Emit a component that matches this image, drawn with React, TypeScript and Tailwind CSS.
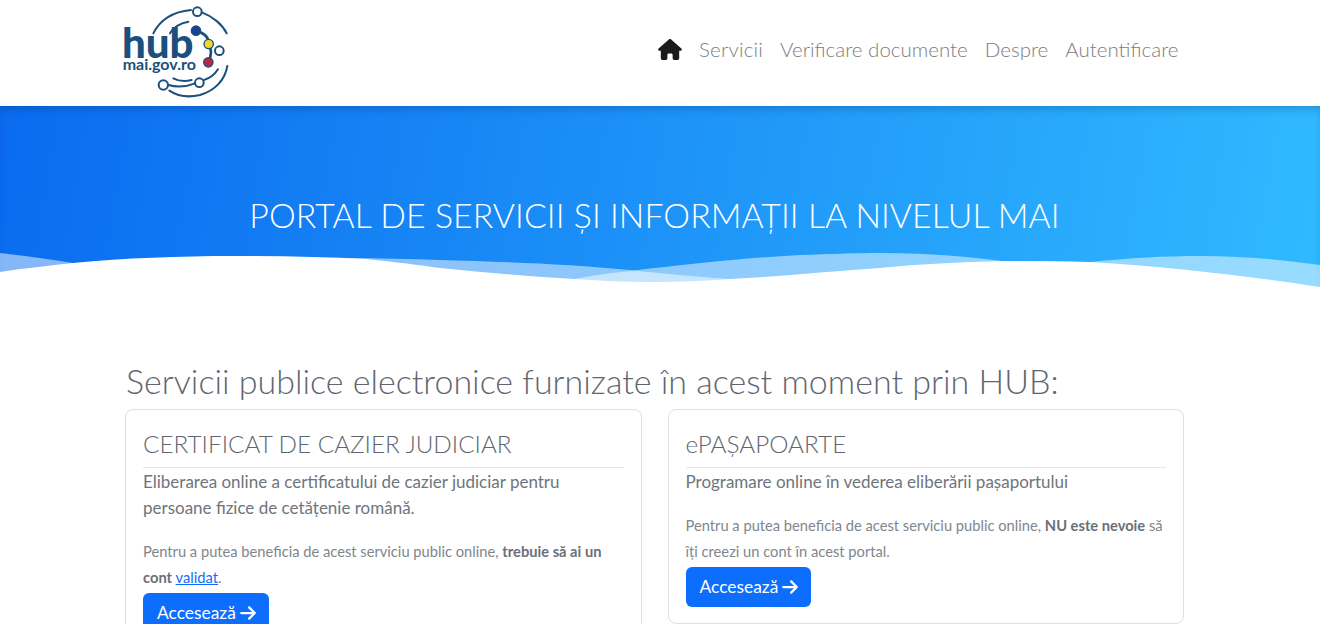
const font = "font-['Lato','Noto_Sans',sans-serif]";

function Logo() {
  const navy = "#1b4f7c";
  return (
    <svg width="130" height="105" viewBox="0 0 390 315" className="block" fill="none">
      <g stroke={navy} strokeWidth="6" strokeLinecap="round">
        <path d="M130 100 C150 60 190 35 243 30" />
        <circle cx="262" cy="35" r="13" />
        <path d="M277 38 C310 50 338 75 350 100" />
        <path d="M180 100 C190 82 208 70 235 65" />
        <path d="M262 95 C285 100 296 115 296 132 C308 150 302 172 295 187" strokeWidth="8" />
        <circle cx="328" cy="152" r="13" />
        <path d="M352 198 C345 240 315 272 270 285 C240 292 205 290 178 272" />
        <circle cx="160" cy="255" r="14" />
        <path d="M175 255 C200 262 230 260 255 250" />
        <circle cx="268" cy="248" r="13" />
        <path d="M190 235 C205 243 225 245 245 240" />
        <path d="M282 240 C300 235 315 222 324 208" />
      </g>
      <circle cx="258" cy="92" r="14" fill="#1d3f94" stroke={navy} strokeWidth="4" />
      <circle cx="296" cy="132" r="14" fill="#f4d52b" stroke={navy} strokeWidth="4" />
      <circle cx="295" cy="187" r="14" fill="#c3243b" stroke={navy} strokeWidth="4" />
      <text x="36" y="175" fontFamily="Lato, sans-serif" fontWeight="900" fontSize="126" fill={navy}>hub</text>
      <text x="38" y="211" fontFamily="Lato, sans-serif" fontWeight="700" fontSize="48" fill={navy}>mai.gov.ro</text>
    </svg>
  );
}

function HomeIcon() {
  return (
    <svg width="24" height="21" viewBox="0 0 576 512" fill="#1a1a1a" className="block">
      <path d="M575.800 255.500c0 18-15 32.100-32 32.100h-32l.7 160.200c0 2.700-.2 5.400-.5 8.100V472c0 22.100-17.900 40-40 40H456c-1.100 0-2.200 0-3.300-.1c-1.400 .1-2.800 .1-4.200 .1H416 392c-22.100 0-40-17.900-40-40V448 384c0-17.700-14.300-32-32-32H256c-17.700 0-32 14.300-32 32v64 24c0 22.100-17.900 40-40 40H160 128.100c-1.500 0-3-.1-4.500-.2c-1.200 .1-2.400 .2-3.600 .2H104c-22.100 0-40-17.900-40-40V360c0-.9 0-1.900 .1-2.800V287.600H32c-18 0-32-14-32-32.100c0-9 3-17 10-24L266.400 8c7-7 15-8 22-8s15 2 21 7L564.800 231.500c8 7 12 15 11 24z" />
    </svg>
  );
}

function ArrowRight() {
  return (
    <svg width="16" height="18" viewBox="0 0 448 512" fill="currentColor" className="block">
      <path d="M438.600 278.600c12.500-12.500 12.500-32.800 0-45.300l-160-160c-12.500-12.500-32.800-12.500-45.300 0s-12.500 32.800 0 45.300L338.800 224 32 224c-17.700 0-32 14.300-32 32s14.300 32 32 32l306.700 0L233.400 393.400c-12.500 12.500-12.500 32.800 0 45.300s32.800 12.500 45.300 0l160-160z" />
    </svg>
  );
}

function Wave() {
  return (
    <svg className="absolute left-0 bottom-0 block" width="1320" height="60" viewBox="0 240 1320 60">
      <path fill="#ffffff" fillOpacity="0.5" d="M0 253 C25 256 50 259 73 263 L200 280 L330 270 L350 258 C380 258 410 259 440 260 C510 262 570 264 630 270 C665 274 700 277 730 279 L950 290 L1050 275 L1090 262 C1130 258 1165 256 1200 256 C1245 256 1285 260 1320 265 L1320 300 L0 300 Z" />
      <path fill="#ffffff" fillOpacity="0.5" d="M500 300 L575 279 C595 275 612 273 630 271 C690 264 745 258 800 255 C830 254 855 253 880 253 C925 253 965 256 1010 262 L1100 300 Z" />
      <path fill="#ffffff" d="M0 272 C25 268 48 266 73 263 C125 258 180 256 233 256 C280 256 325 257 367 259 C395 262 420 265 440 268 C490 273 535 277 575 279 C600 281 625 282 650 282 C680 282 705 281 730 279 C785 276 835 271 880 268 C920 264 960 262 1000 261 C1030 261 1060 261 1090 262 C1170 267 1250 276 1320 287 L1320 300 L0 300 Z" />
    </svg>
  );
}

function Card({ title, lead, children, label }: { title: string; lead: string; children: React.ReactNode; label: string }) {
  return (
    <div className="flex-1 rounded-lg border border-[#dfdfdf] bg-white px-[17px] pt-[17px] pb-[16px]">
      <h5 className="border-b border-[#e6e6e6] pb-[7px] text-[24.3px] leading-[33px] font-light text-[#5f6670]">{title}</h5>
      <p className="mt-px text-[17px] leading-[26px] text-[#6e757c]">{lead}</p>
      <p className="mt-[17px] text-[14.7px] leading-[26px] text-[#80868d]">{children}</p>
      <button className="mt-[3px] flex h-[40px] items-center gap-[4px] rounded-md bg-[#0d6efd] pr-[13px] pl-[14px] text-[17.4px] text-white">
        {label}
        <ArrowRight />
      </button>
    </div>
  );
}

export default function App() {
  return (
    <div className={`relative h-[624px] overflow-hidden bg-white ${font}`}>
      <header className="flex h-[106px] justify-between pr-[141.500px] pl-[110px]">
        <Logo />
        <nav className="flex items-center gap-[17px] pb-[7px] text-[20.5px] font-light text-[#7d7d7d]">
          <HomeIcon />
          <a className="tracking-[0.2px]">Servicii</a>
          <a>Verificare documente</a>
          <a>Despre</a>
          <a>Autentificare</a>
        </nav>
      </header>
      <section className="relative flex h-[194px] justify-center bg-linear-[100deg] from-[#0a6bf0] to-[#30baff] pt-[87px] pr-[11px] shadow-[inset_0_6px_10px_-4px_rgba(0,40,90,0.3)]">
        <h1 className="text-[33.8px] leading-[44px] font-light tracking-[0.06px] text-white">PORTAL DE SERVICII ȘI INFORMAȚII LA NIVELUL MAI</h1>
        <Wave />
      </section>
      <main className="pr-[136px] pl-[125px]">
        <h2 className="mt-[58px] pl-px text-[34px] leading-[46px] font-light text-[#5f6670]">Servicii publice electronice furnizate în acest moment prin HUB:</h2>
        <div className="mt-[5px] flex items-start gap-[26px]">
          <Card title="CERTIFICAT DE CAZIER JUDICIAR" lead="Eliberarea online a certificatului de cazier judiciar pentru persoane fizice de cetățenie română." label="Accesează">
            Pentru a putea beneficia de acest serviciu public online, <b className="font-bold text-[#6a7079]">trebuie să ai un cont </b>
            <a className="text-[#0d6efd] underline">validat</a>.
          </Card>
          <Card title="ePAȘAPOARTE" lead="Programare online în vederea eliberării pașaportului" label="Accesează">
            Pentru a putea beneficia de acest serviciu public online, <b className="font-bold text-[#6a7079]">NU este nevoie</b> să îți creezi un cont în acest portal.
          </Card>
        </div>
      </main>
    </div>
  );
}
